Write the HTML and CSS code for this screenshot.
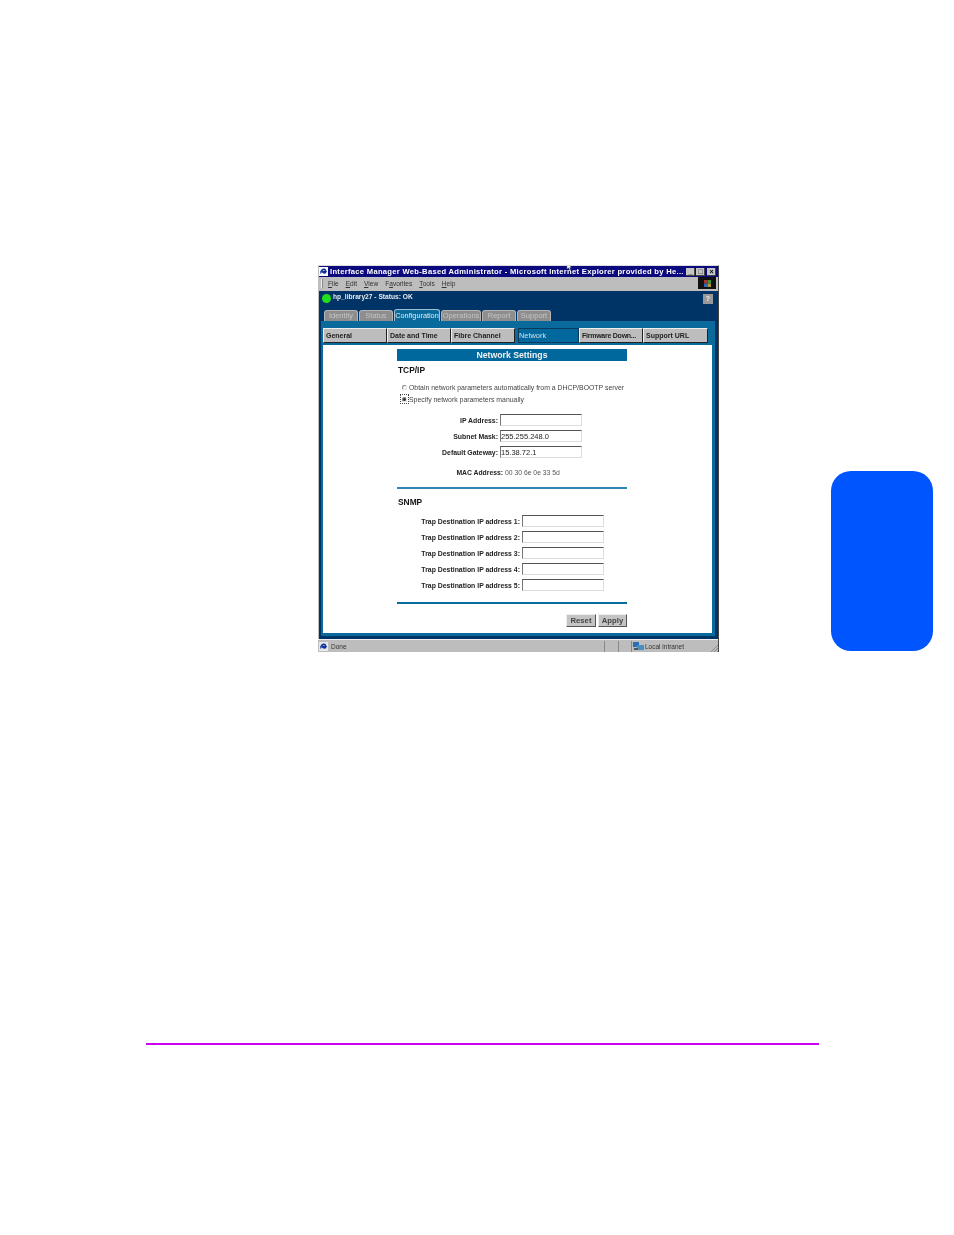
FILE: index.html
```html
<!DOCTYPE html>
<html lang="en">
<head>
<meta charset="utf-8">
<title>Network Settings</title>
<link rel="stylesheet" href="styles.css">
</head>
<body>
<div class="side-tab"></div>
<div class="shot">
  <div class="titlebar">
    <svg class="ie" viewBox="0 0 9 9"><rect width="9" height="9" fill="#fff"/><path d="M2 6.500C1 3.500 4 1.500 6 2.500L7 4.500H3.500C3.500 6 5.500 6.500 7 5.500" fill="none" stroke="#0a2f9c" stroke-width="1.400"/></svg>
    <span class="title-text">Interface Manager Web-Based Administrator - Microsoft Internet Explorer provided by He...</span>
    <div class="winbtns"><span class="winbtn">_</span><span class="winbtn">□</span><span class="winbtn gap">×</span></div>
  </div>
  <div class="menubar">
    <span class="grip"></span>
    <span class="menu-items"><span><u>F</u>ile</span><span><u>E</u>dit</span><span><u>V</u>iew</span><span>F<u>a</u>vorites</span><span><u>T</u>ools</span><span><u>H</u>elp</span></span>
    <span class="throbber"><svg viewBox="0 0 8 8"><rect x="0" y="0" width="4" height="4" fill="#a33"/><rect x="4" y="0" width="4" height="4" fill="#393"/><rect x="0" y="4" width="4" height="4" fill="#36a"/><rect x="4" y="4" width="4" height="4" fill="#a93"/></svg></span>
  </div>
  <div class="app">
    <div class="statusline">
      <span class="led"></span>
      <span class="device">hp_library27 - Status: OK</span>
      <span class="help">?</span>
    </div>
    <div class="tabs">
      <span class="tab w-identity">Identity</span>
      <span class="tab w-status">Status</span>
      <span class="tab active w-config">Configuration</span>
      <span class="tab w-ops">Operations</span>
      <span class="tab w-report">Report</span>
      <span class="tab w-support">Support</span>
    </div>
    <div class="frame">
      <div class="subtabs">
        <span class="subtab s1">General</span>
        <span class="subtab s2">Date and Time</span>
        <span class="subtab s3">Fibre Channel</span>
        <span class="subtab on s4">Network</span>
        <span class="subtab s5">Firmware Down...</span>
        <span class="subtab s6">Support URL</span>
      </div>
      <div class="content">
        <div class="form">
          <div class="banner">Network Settings</div>
          <h2 class="sec tcp">TCP/IP</h2>
          <div class="radio r1"><span class="dot"></span>Obtain network parameters automatically from a DHCP/BOOTP server</div>
          <div class="radio r2"><span class="focus"><span class="dot checked"></span></span>Specify network parameters manually</div>
          <div class="rows net">
            <div class="row"><label>IP Address:</label><span class="field"></span></div>
            <div class="row"><label>Subnet Mask:</label><span class="field">255.255.248.0</span></div>
            <div class="row"><label>Default Gateway:</label><span class="field">15.38.72.1</span></div>
          </div>
          <div class="mac"><label>MAC Address:</label><span>00 30 6e 0e 33 5d</span></div>
          <hr class="rule r-a">
          <h2 class="sec snmp">SNMP</h2>
          <div class="rows trap">
            <div class="row"><label>Trap Destination IP address 1:</label><span class="field"></span></div>
            <div class="row"><label>Trap Destination IP address 2:</label><span class="field"></span></div>
            <div class="row"><label>Trap Destination IP address 3:</label><span class="field"></span></div>
            <div class="row"><label>Trap Destination IP address 4:</label><span class="field"></span></div>
            <div class="row"><label>Trap Destination IP address 5:</label><span class="field"></span></div>
          </div>
          <hr class="rule r-b">
          <div class="actions"><span class="btn reset">Reset</span><span class="btn apply">Apply</span></div>
        </div>
      </div>
    </div>
  </div>
  <div class="statusbar">
    <svg class="ie small" viewBox="0 0 9 9"><rect width="9" height="9" fill="#e8e8e8"/><path d="M2 6.500C1 3.500 4 1.500 6 2.500L7 4.500H3.500C3.500 6 5.500 6.500 7 5.500" fill="none" stroke="#0a2f9c" stroke-width="1.400"/></svg>
    <span class="done">Done</span>
    <span class="cell c1"></span>
    <span class="cell c2"></span>
    <span class="cell zone"><svg class="globe" viewBox="0 0 11 9"><rect x="0" y="0" width="6" height="5" fill="#2a6db0"/><rect x="4" y="3" width="7" height="5" fill="#4a8fc0"/><rect x="1" y="6" width="4" height="2" fill="#555"/></svg>Local intranet</span>
    <svg class="resize" viewBox="0 0 8 8"><path d="M1 8L8 1M4 8L8 4M7 8L8 7" stroke="#8a8a8a" stroke-width="1" fill="none"/></svg>
  </div>
  <svg class="cursor" viewBox="0 0 6 8"><path d="M1 0V6L2.500 4.800L3.500 7L4.500 6.500L3.600 4.500H5.500Z" fill="#fff" stroke="#555" stroke-width="0.400"/></svg>
</div>
<div class="footer-rule"></div>
</body>
</html>
```
FILE: styles.css
```css
html, body { margin: 0; padding: 0; background: #fff; }
body { position: relative; width: 954px; height: 1235px; overflow: hidden; font-family: "Liberation Sans", Arial, sans-serif; }

.side-tab { position: absolute; left: 831px; top: 471px; width: 102px; height: 180px; background: #0055ff; border-radius: 20px; }

.shot { position: absolute; left: 318px; top: 265px; width: 401px; height: 387px; box-sizing: border-box; background: #bdbdbd; display: flex; flex-direction: column; overflow: hidden; border-top: 1px solid #ddd; border-right: 1px solid #444; filter: blur(0.35px); }

.titlebar { height: 11px; margin: 0 0 0 1px; background: #0a0a7e; color: #fff; display: flex; align-items: center; font-size: 7.600px; font-weight: 700; white-space: nowrap; flex: none; }
.ie { width: 9px; height: 9px; margin: 0 2px 0 0; flex: none; }
.title-text { flex: 1; letter-spacing: 0.300px; }
.winbtns { display: flex; gap: 1px; margin-right: 2px; }
.winbtn { width: 9px; height: 8px; background: #c6c6c6; color: #000; font-size: 7px; line-height: 8px; text-align: center; box-shadow: inset -1px -1px 0 #444; }
.winbtn.gap { margin-left: 1px; }

.menubar { height: 14px; box-sizing: border-box; padding-bottom: 2px; display: flex; align-items: center; flex: none; font-size: 6.600px; color: #333; }
.grip { width: 1px; height: 9px; margin-left: 3px; background: #eee; box-shadow: 1px 0 0 #888; }
.menu-items { display: flex; gap: 7px; margin-left: 6px; flex: 1; }
.menu-items u { text-decoration-thickness: 0.500px; }
.throbber { width: 18px; height: 12px; background: #111; display: flex; align-items: center; justify-content: center; margin-right: 2px; }
.throbber svg { width: 7px; height: 7px; }

.app { flex: 1; background: #003366; margin: 0 0 0 1px; display: flex; flex-direction: column; min-height: 0; }
.statusline { height: 18px; flex: none; display: flex; align-items: flex-start; color: #fff; font-size: 6.650px; font-weight: 700; position: relative; }
.led { width: 9px; height: 9px; border-radius: 50%; background: #1fe01f; margin: 3px 2px 0 3px; }
.device { line-height: 12px; opacity: .9; }
.help { position: absolute; right: 5px; top: 3px; width: 10px; height: 10px; background: #999; color: #eee; text-align: center; font-size: 7px; line-height: 10px; }

.tabs { height: 12px; flex: none; display: flex; align-items: flex-end; padding-left: 5px; gap: 1px; }
.tab { height: 11px; box-sizing: border-box; background: #8e8e8e; color: #c5c5c5; border: 1px solid #b5b5b5; border-bottom: 0; border-radius: 3px 3px 0 0; font-size: 7.500px; line-height: 10px; text-align: center; white-space: nowrap; }
.tab.active { height: 12px; background: #0a6a9c; color: #eaeaea; border-color: #9fc3d6; line-height: 11px; font-size: 7.300px; }
.w-identity { width: 34px; }
.w-status { width: 34px; }
.w-config { width: 46px; }
.w-ops { width: 40px; }
.w-report { width: 34px; }
.w-support { width: 34px; }

.frame { flex: 1; margin: 0 3px 3px 2px; background: #0a6a9c; display: flex; flex-direction: column; padding: 0 3px 3px 2px; min-height: 0; }
.subtabs { height: 24px; flex: none; display: flex; align-items: flex-end; padding-bottom: 2px; box-sizing: border-box; margin-right: -3px; }
.subtab { height: 15px; flex: none; box-sizing: border-box; background: #bdbdbd; border: 1px solid #222; border-top-color: #eee; border-left-color: #eee; font-size: 7px; font-weight: 700; color: #222; line-height: 13px; padding-left: 2px; white-space: nowrap; }
.subtab.on { background: #00689c; color: #cfe2ee; border-color: #0b3a5c; font-weight: 400; font-size: 7.400px; margin-left: 3px; padding-left: 0; }
.s1 { width: 64px; }
.s2 { width: 64px; }
.s3 { width: 64px; }
.s4 { width: 61px; }
.s5 { width: 64px; letter-spacing: -0.250px; }
.s6 { width: 65px; }

.content { flex: 1; background: #fff; min-height: 0; display: flex; }
.form { width: 230px; margin-left: 74px; }
.banner { margin-top: 4px; height: 12px; background: #00689c; color: #f2f2f2; font-size: 8.700px; font-weight: 700; line-height: 12px; text-align: center; }
.sec { margin: 0; font-size: 8.400px; font-weight: 700; color: #111; padding-left: 1px; line-height: 10px; }
.tcp { margin-top: 4px; }
.snmp { margin-top: 8px; }
.radio { font-size: 6.900px; color: #444; display: flex; align-items: center; white-space: nowrap; height: 12px; }
.r1 { margin-top: 6px; padding-left: 5px; }
.r2 { padding-left: 3px; }
.dot { width: 5px; height: 5px; border-radius: 50%; border: 1px solid #888; border-right-color: #ddd; border-bottom-color: #ddd; box-sizing: border-box; margin-right: 2px; display: block; }
.dot.checked { background: #333; margin: 0; }
.focus { width: 9px; height: 10px; box-sizing: border-box; border: 1px dotted #444; display: flex; align-items: center; justify-content: center; }

.rows { display: flex; flex-direction: column; gap: 4px; }
.net { margin-top: 9px; }
.trap { margin-top: 8px; }
.row { height: 12px; display: flex; align-items: center; }
.row label, .mac label { font-size: 6.900px; font-weight: 700; color: #222; text-align: right; white-space: nowrap; }
.net label { width: 101px; }
.trap label { width: 123px; }
.field { display: block; margin-left: 2px; width: 82px; height: 12px; box-sizing: border-box; border: 1px solid #ddd; border-top-color: #555; border-left-color: #777; font-size: 7.500px; line-height: 11px; color: #222; }
.mac { margin-top: 8px; height: 12px; display: flex; align-items: center; font-size: 6.800px; color: #555; }
.mac label { width: 106px; margin-right: 2px; font-size: 6.800px; }
.rule { border: 0; margin: 0; height: 2px; background: #2e86b4; }
.r-a { margin-top: 9px; }
.r-b { margin-top: 11px; background: #0a6a9c; }
.actions { margin-top: 10px; display: flex; justify-content: flex-end; gap: 2px; }
.btn { height: 13px; box-sizing: border-box; background: #c4c4c4; border: 1px solid #555; border-top-color: #eee; border-left-color: #eee; font-size: 7.700px; font-weight: 700; color: #444; line-height: 11px; text-align: center; }
.reset { width: 30px; }
.apply { width: 29px; }

.statusbar { height: 13px; flex: none; display: flex; align-items: center; font-size: 6.500px; color: #333; border-top: 1px solid #eee; box-sizing: border-box; }
.ie.small { margin: 0 1px; }
.done { flex: 1; margin-left: 2px; }
.cell { height: 11px; border-left: 1px solid #888; box-sizing: border-box; display: flex; align-items: center; }
.c1 { width: 14px; }
.c2 { width: 13px; }
.zone { width: 79px; padding-left: 1px; }
.globe { width: 11px; height: 9px; margin-right: 1px; }
.resize { width: 8px; height: 8px; margin-top: 3px; margin-left: 0; }
.cursor { position: absolute; left: 248px; top: -3px; width: 6px; height: 8px; }

.footer-rule { position: absolute; left: 146px; top: 1043px; width: 673px; height: 2px; background: #cc00ee; }
```
